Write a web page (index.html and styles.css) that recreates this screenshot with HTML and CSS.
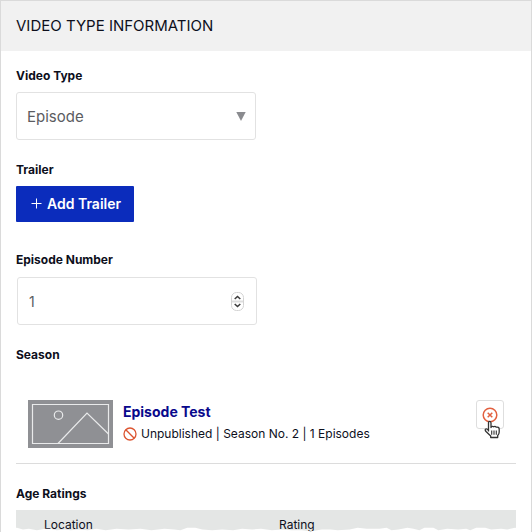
FILE: index.html
```html
<!DOCTYPE html>
<html lang="en">
<head>
<meta charset="utf-8">
<title>Video Type Information</title>
<link rel="stylesheet" href="styles.css">
</head>
<body>
<main class="panel">
  <h1 class="panel-title">VIDEO TYPE INFORMATION</h1>
  <form class="panel-body">
    <div class="field">
      <label class="label" for="video-type">Video Type</label>
      <div class="control">
        <select class="input" id="video-type"><option>Episode</option></select>
        <svg class="arrow" width="10" height="9" viewBox="0 0 10 9" aria-hidden="true"><path d="M0.3 0h9.4L5 9z" fill="#8a8b8f"/></svg>
      </div>
    </div>
    <div class="field field-trailer">
      <span class="label" id="trailer-label">Trailer</span>
      <button class="add" type="button" aria-describedby="trailer-label">
        <svg width="11" height="11" viewBox="0 0 11 11" aria-hidden="true"><path d="M5.500 0.500v10M0.500 5.500h10" stroke="#fff" stroke-width="1"/></svg>
        Add Trailer
      </button>
    </div>
    <div class="field">
      <label class="label" for="episode-number">Episode Number</label>
      <div class="control control-number">
        <input class="input" id="episode-number" type="number" value="1">
        <svg class="spinner" width="13" height="19" viewBox="0 0 13 19" aria-hidden="true">
          <rect x="0.5" y="0.5" width="12" height="18" rx="5" fill="#fff" stroke="#d3d3d3"/>
          <path d="M1 9.5h11" stroke="#dedede" stroke-width="2"/>
          <path d="M3.7 7l2.8-2.600L9.300 7M3.700 12l2.800 2.600L9.300 12" fill="none" stroke="#3b3b3b" stroke-width="1.5"/>
        </svg>
      </div>
    </div>
    <section class="field">
      <h2 class="label">Season</h2>
      <div class="season">
        <svg class="thumb" width="85" height="48" viewBox="0 0 85 48" role="img" aria-label="No image">
          <path d="M0 0h85v48H0z" fill="#8f9094"/>
          <g fill="none" stroke="#e9eaeb" stroke-width="1.2">
            <path d="M4.500 4.500h76v39h-76z"/>
            <circle cx="30.500" cy="15.200" r="4.200"/>
            <path d="M30 43.500L59 13l21.500 21"/>
          </g>
        </svg>
        <div class="info">
          <a class="name" href="#season">Episode Test</a>
          <p class="meta">
            <svg width="14" height="14" viewBox="0 0 14 14" aria-hidden="true"><g fill="none" stroke="#dc5430" stroke-width="1.3"><circle cx="7" cy="7" r="6"/><path d="M2.800 2.800l8.400 8.400"/></g></svg>
            <span>Unpublished | Season No. 2 | 1 Episodes</span>
          </p>
        </div>
        <button class="remove" type="button" aria-label="Remove season">
          <svg width="16" height="16" viewBox="0 0 16 16" aria-hidden="true"><g fill="none" stroke="#e2603f" stroke-width="1.500"><circle cx="8" cy="8" r="6.800"/><path d="M5.700 5.700l4.600 4.600M10.300 5.700l-4.600 4.600"/></g></svg>
          <svg class="pointer" width="17" height="19" viewBox="0 0 17 19" aria-hidden="true">
            <path d="M4.500 11.500V3Q4.500 1.300 5.700 1.300T7 3v4.500Q8 5.500 9.700 6.800Q11 5.800 12.200 7.200Q15 6.600 15.200 9V12Q15.200 14 13.700 15.500V17.500H6.700V16L2 11.500Q0.500 9.500 1.800 9Q3 8.600 4.500 10.500" fill="#fff" stroke="#333" stroke-width="1.3" stroke-linejoin="round"/>
            <path d="M7.700 10.500v4.200M10 10.500v4.200M12.300 10.500v4.200" stroke="#333" stroke-width="1.100"/>
          </svg>
        </button>
      </div>
    </section>
    <section class="field">
      <h2 class="label">Age Ratings</h2>
      <table class="ratings">
        <thead><tr><th scope="col">Location</th><th scope="col">Rating</th></tr></thead>
      </table>
    </section>
  </form>
  <svg class="torn" viewBox="0 0 532 6" preserveAspectRatio="none" aria-hidden="true">
    <path d="M0 3L6 2 16 1 22 3 28 2 36 4 44 2 49 2 56 4 64 3 70 4 78 3 87 4 96 2 105 4 116 2 128 3 140 2 151 4 164 2 174 3 180 4 187 1 195 1 202 3 212 4 222 3 233 4 242 2 252 3 261 2 272 4 282 3 292 4 302 4 311 5 322 3 331 3 338 4 350 3 358 1 367 2 380 2 387 1 392 4 399 3 408 1 414 2 420 4 425 1 434 1 439 4 448 2 459 3 467 2 471 4 477 1 486 1 492 3 502 2 508 3 516 1 525 3 532 2V6H0z" fill="#fff"/>
  </svg>
</main>
</body>
</html>
```
FILE: styles.css
```css
* {
  box-sizing: border-box;
}

body {
  margin: 0;
  height: 100vh;
  overflow: hidden;
  background: #fff;
  color: #0d0f1c;
  font-family: Inter, "Liberation Sans", sans-serif;
}

.panel {
  position: relative;
  height: 100%;
  overflow: hidden;
  border: 1px solid #dadada;
  border-bottom: 0;
}

.panel-title {
  margin: 0;
  padding: 15px;
  background: #f1f1f1;
  font-size: 15px;
  font-weight: 400;
  line-height: 20px;
}

.panel-body {
  display: flex;
  flex-direction: column;
  gap: 20px;
  padding: 15px;
}

.field {
  display: flex;
  flex-direction: column;
}

.field-trailer {
  align-items: flex-start;
  padding-bottom: 8px;
}

.label {
  display: block;
  margin: 0 0 6px;
  font-size: 12px;
  font-weight: 700;
  line-height: 20px;
}

.control {
  position: relative;
  width: 240px;
  max-width: 100%;
}

.control-number {
  margin: 1px 1px 0;
}

.input {
  display: block;
  width: 100%;
  height: 48px;
  padding: 0 10px;
  border: 1px solid #e2e2e2;
  border-radius: 3px;
  background: #fff;
  color: #5b5c61;
  font: 15px Inter, "Liberation Sans", sans-serif;
  appearance: none;
}

.input[type="number"] {
  padding: 0 11px;
  appearance: textfield;
  font-size: 14px;
}

.input::-webkit-inner-spin-button {
  appearance: none;
  margin: 0;
}

.arrow {
  position: absolute;
  top: 20px;
  right: 10px;
  pointer-events: none;
}

.spinner {
  position: absolute;
  top: 15px;
  right: 13px;
  pointer-events: none;
}

.add {
  display: flex;
  align-items: center;
  gap: 5px;
  height: 36px;
  padding: 0 13px 1px 15px;
  border: 0;
  border-radius: 1px;
  background: #0b2cbc;
  color: #fff;
  font: 600 14px Inter, "Liberation Sans", sans-serif;
  white-space: nowrap;
}

.season {
  display: flex;
  align-items: flex-start;
  gap: 10px;
  padding: 29px 12px 15px;
  border-bottom: 1px solid #dcdcdc;
}

.thumb {
  flex: none;
}

.info {
  flex: 1;
  padding-top: 2px;
}

.name {
  display: block;
  color: #09098c;
  font-size: 14px;
  font-weight: 700;
  line-height: 20px;
  text-decoration: none;
}

.meta {
  display: flex;
  align-items: center;
  gap: 4px;
  margin: 0;
  padding-top: 1px;
  font-size: 12px;
  line-height: 22px;
  white-space: nowrap;
}

.remove {
  position: relative;
  display: flex;
  align-items: center;
  justify-content: center;
  width: 28px;
  height: 29px;
  padding: 0;
  border: 1px solid #dedede;
  border-radius: 3px;
  background: #fff;
}

.pointer {
  position: absolute;
  top: 19px;
  left: 7px;
}

.ratings {
  width: 100%;
  border-collapse: collapse;
  table-layout: fixed;
  background: #e4e6e5;
}

.ratings th {
  padding: 5px 0 5px 28px;
  font-size: 12px;
  font-weight: 400;
  line-height: 20px;
  text-align: left;
}

.ratings th:first-child {
  width: 47%;
}

.torn {
  position: absolute;
  bottom: 0;
  left: 0;
  width: 100%;
  height: 5px;
}
```
